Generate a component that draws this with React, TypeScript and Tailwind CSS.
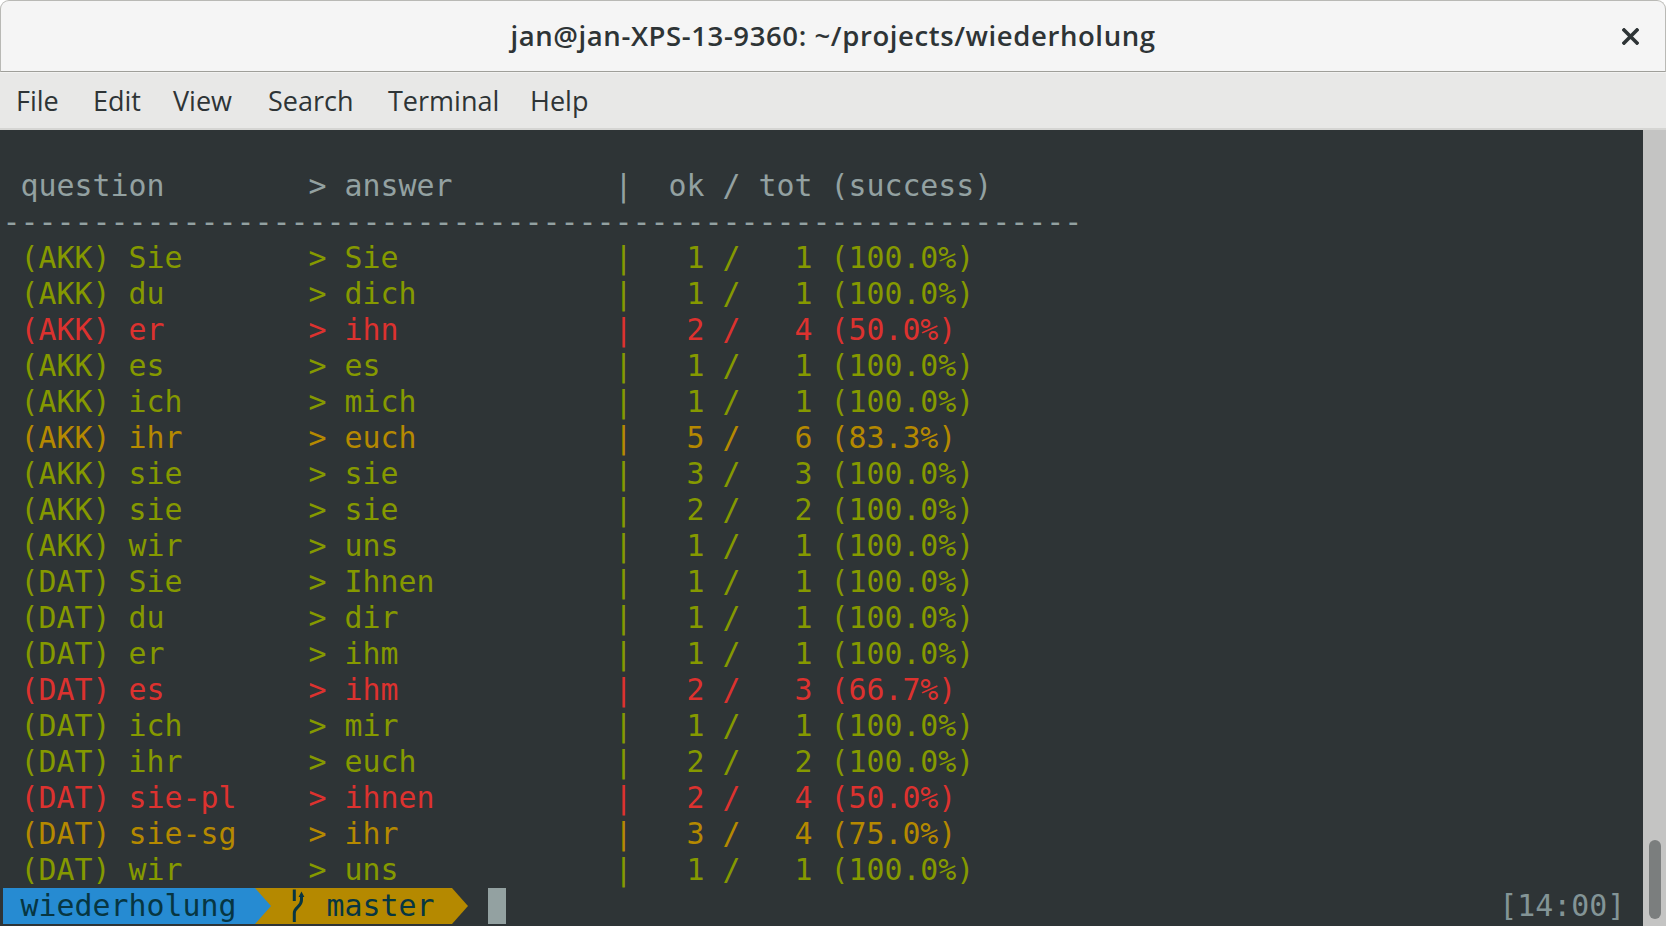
import React from "react";

type Row = [string, string, number, number, string, string];

const GREEN = "text-[#859900]";
const RED = "text-[#dc322f]";
const YELLOW = "text-[#b58900]";

const rows: Row[] = [
  ["(AKK) Sie", "Sie", 1, 1, "100.0%", GREEN],
  ["(AKK) du", "dich", 1, 1, "100.0%", GREEN],
  ["(AKK) er", "ihn", 2, 4, "50.0%", RED],
  ["(AKK) es", "es", 1, 1, "100.0%", GREEN],
  ["(AKK) ich", "mich", 1, 1, "100.0%", GREEN],
  ["(AKK) ihr", "euch", 5, 6, "83.3%", YELLOW],
  ["(AKK) sie", "sie", 3, 3, "100.0%", GREEN],
  ["(AKK) sie", "sie", 2, 2, "100.0%", GREEN],
  ["(AKK) wir", "uns", 1, 1, "100.0%", GREEN],
  ["(DAT) Sie", "Ihnen", 1, 1, "100.0%", GREEN],
  ["(DAT) du", "dir", 1, 1, "100.0%", GREEN],
  ["(DAT) er", "ihm", 1, 1, "100.0%", GREEN],
  ["(DAT) es", "ihm", 2, 3, "66.7%", RED],
  ["(DAT) ich", "mir", 1, 1, "100.0%", GREEN],
  ["(DAT) ihr", "euch", 2, 2, "100.0%", GREEN],
  ["(DAT) sie-pl", "ihnen", 2, 4, "50.0%", RED],
  ["(DAT) sie-sg", "ihr", 3, 4, "75.0%", YELLOW],
  ["(DAT) wir", "uns", 1, 1, "100.0%", GREEN],
];

const header =
  " " + "question".padEnd(16) + "> " + "answer".padEnd(15) + "|  ok / tot (success)";

function rowText(r: Row) {
  return " " + r[0].padEnd(16) + "> " + r[1].padEnd(15) + "|   " + r[2] + " /   " + r[3] + " (" + r[4] + ")";
}

function Line({ children, className = "" }: { children?: React.ReactNode; className?: string }) {
  return <div className={"h-[36px] leading-[36px] whitespace-pre " + className}>{children}</div>;
}

function Arrow({ fg, bg }: { fg: string; bg: string }) {
  return (
    <span className={"inline-block w-[1ch] h-[36px] " + bg}>
      <svg viewBox="0 0 18 36" preserveAspectRatio="none" className="w-full h-full">
        <polygon points="0,0 16,18 0,36" fill={fg} />
      </svg>
    </span>
  );
}

function BranchIcon() {
  return (
    <span className="inline-block w-[1ch] h-[36px]">
      <svg viewBox="0 0 18 36" className="w-full h-full" fill="none" stroke="#073642" strokeWidth="3">
        <path d="M3.3 1.5 V13" />
        <path d="M3.3 34 V25 C3.3 19 10.5 19 10.5 12 V7" />
        <polygon points="7.6,9 10.5,3.5 13.4,9" fill="#073642" stroke="none" />
      </svg>
    </span>
  );
}

export default function App() {
  return (
    <div className="w-[1666px] h-[926px] bg-white flex flex-col overflow-hidden">
      {/* title bar */}
      <div className="h-[72px] shrink-0 bg-[#f5f5f5] rounded-t-[9px] border border-[#b9b9b5] border-b-[#9f9f9a] flex items-center relative font-['Open_Sans',sans-serif] text-[#2e3436]">
        <div className="flex-1 text-center text-[27.5px] font-semibold tracking-[0.6px]">
          jan@jan-XPS-13-9360: ~/projects/wiederholung
        </div>
        <div className="absolute right-[26px] top-[27px]">
          <svg width="17" height="17" viewBox="0 0 17 17" stroke="#2e3436" strokeWidth="3.6" strokeLinecap="square">
            <path d="M2 2 L15 15 M15 2 L2 15" />
          </svg>
        </div>
      </div>

      {/* menu bar */}
      <div className="h-[58px] shrink-0 bg-[#e8e8e7] border-t border-t-[#f2f2f1] border-b-2 border-b-[#d5d5d3] flex items-center pl-[16px] pt-[2px] text-[27px] text-[#2e3436] font-['Open_Sans',sans-serif]">
        <span className="w-[77px]">File</span>
        <span className="w-[80px]">Edit</span>
        <span className="w-[95px]">View</span>
        <span className="w-[120px]">Search</span>
        <span className="w-[142px]">Terminal</span>
        <span>Help</span>
      </div>

      {/* terminal */}
      <div className="flex-1 flex min-h-0">
        <div className="flex-1 bg-[#2e3436] pt-[2px] pl-[2.6px] font-['DejaVu_Sans_Mono',monospace] text-[29.9px] text-[#93a1a1] overflow-hidden">
          <Line />
          <Line>{header}</Line>
          <Line>{"-".repeat(60)}</Line>
          {rows.map((r, i) => (
            <Line key={i} className={r[5]}>
              {rowText(r)}
            </Line>
          ))}
          <div className="h-[36px] leading-[36px] whitespace-pre flex">
            <span className="bg-[#268bd2] text-[#073642]">{" wiederholung "}</span>
            <Arrow fg="#268bd2" bg="bg-[#b58900]" />
            <span className="bg-[#b58900] text-[#073642] flex">
              <span>{" "}</span>
              <BranchIcon />
              <span>{" master "}</span>
            </span>
            <Arrow fg="#b58900" bg="bg-transparent" />
            <span>{" "}</span>
            <span className="inline-block w-[1ch] h-[36px] bg-[#93a1a1]" />
            <span>{" ".repeat(55)}</span>
            <span className="text-[#839496] pl-[3px]">[14:00]</span>
          </div>
        </div>
        <div className="w-[23px] shrink-0 bg-[#c4c4c3] flex flex-col justify-end items-center pb-[7px]">
          <div className="w-[12px] h-[79px] rounded-full bg-[#7b7e7e]" />
        </div>
      </div>
    </div>
  );
}
